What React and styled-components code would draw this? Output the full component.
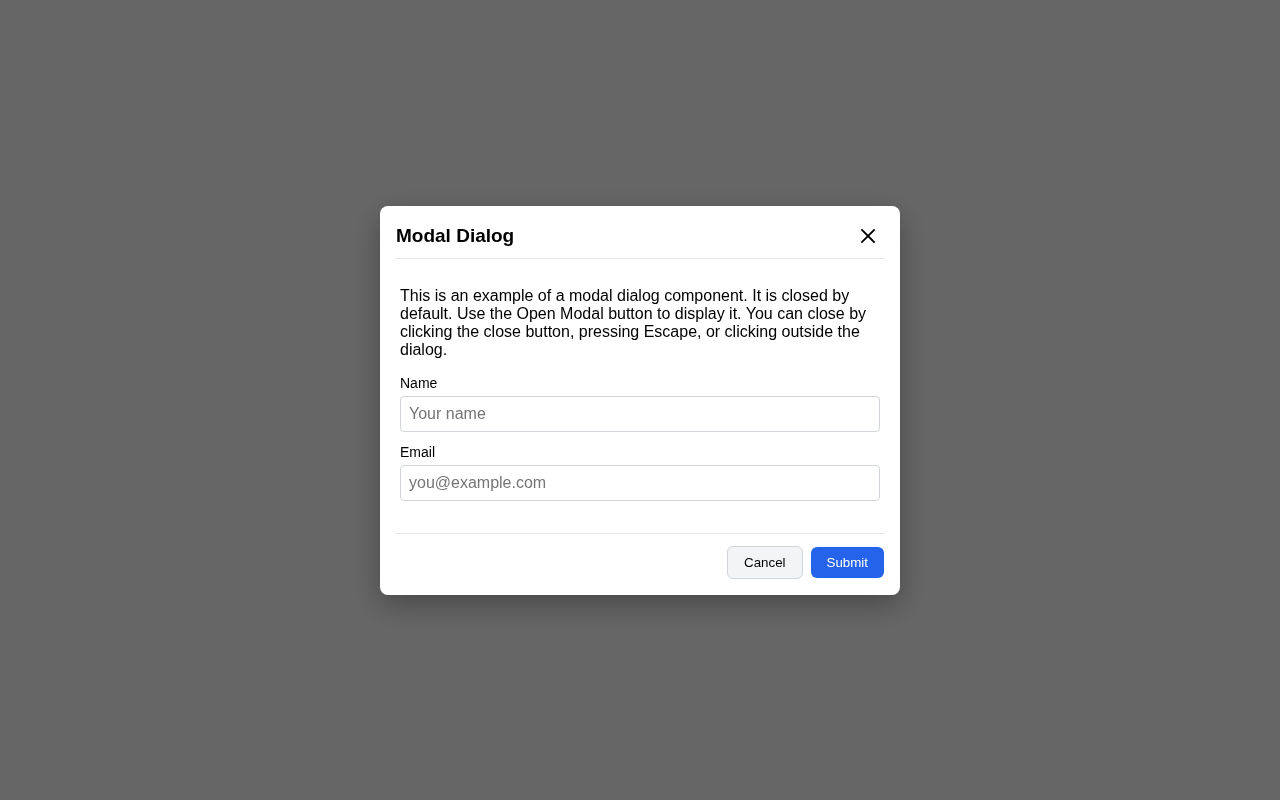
import React from "react";
import styled, { createGlobalStyle } from "styled-components";

const GlobalStyle = createGlobalStyle`
  html, body {
    margin: 0;
    padding: 0;
    height: 100%;
  }
  body {
    font-family: "Liberation Sans", Arial, Helvetica, sans-serif;
    color: #000;
  }
  #root {
    height: 100%;
  }
`;

const Overlay = styled.div`
  position: fixed;
  inset: 0;
  background: rgba(0, 0, 0, 0.6);
  display: flex;
  align-items: center;
  justify-content: center;
`;

const Dialog = styled.div`
  width: 520px;
  box-sizing: border-box;
  background: #fff;
  border-radius: 8px;
  padding: 16px;
  box-shadow: 0 10px 30px rgba(0, 0, 0, 0.3);
  display: flex;
  flex-direction: column;
`;

const Header = styled.div`
  display: flex;
  align-items: center;
  justify-content: space-between;
  height: 28px;
  padding-bottom: 8px;
  border-bottom: 1px solid #e5e7eb;
`;

const Title = styled.h2`
  margin: 0;
  font-size: 19px;
  line-height: 24px;
  font-weight: 700;
`;

const CloseButton = styled.button`
  width: 28px;
  height: 28px;
  padding: 0;
  margin-right: 2px;
  border: none;
  background: transparent;
  display: flex;
  align-items: center;
  justify-content: center;
  cursor: pointer;
  color: #000;
`;

const Body = styled.div`
  padding: 12px 4px 32px;
`;

const Text = styled.p`
  margin: 16px 0;
  font-size: 16px;
  line-height: 18px;
`;

const Field = styled.div`
  display: flex;
  flex-direction: column;
  margin-bottom: 12px;

  &:last-child {
    margin-bottom: 0;
  }
`;

const Label = styled.label`
  font-size: 14px;
  line-height: 17px;
  margin-bottom: 4px;
`;

const Input = styled.input`
  box-sizing: border-box;
  width: 100%;
  height: 36px;
  padding: 0 8px;
  border: 1px solid #d1d5db;
  border-radius: 4px;
  font-family: inherit;
  font-size: 16px;
  color: #000;
  outline: none;

  &::placeholder {
    color: #757575;
  }
`;

const Footer = styled.div`
  display: flex;
  justify-content: flex-end;
  align-items: center;
  gap: 8px;
  padding-top: 12px;
  border-top: 1px solid #e5e7eb;
`;

const Button = styled.button`
  font-family: inherit;
  font-size: 13.33px;
  height: ${(p) => (p.$primary ? "31px" : "33px")};
  padding: 0 16px;
  border-radius: 6px;
  cursor: pointer;
  border: ${(p) => (p.$primary ? "none" : "1px solid #d1d5db")};
  background: ${(p) => (p.$primary ? "#2563eb" : "#f3f4f6")};
  color: ${(p) => (p.$primary ? "#fff" : "#000")};
`;

function CloseIcon() {
  return (
    <svg width="18" height="18" viewBox="0 0 18 18" fill="none">
      <path
        d="M3 3 L15 15 M15 3 L3 15"
        stroke="currentColor"
        strokeWidth="1.8"
        strokeLinecap="square"
      />
    </svg>
  );
}

export default function App() {
  return (
    <>
      <GlobalStyle />
      <Overlay>
        <Dialog role="dialog" aria-modal="true">
          <Header>
            <Title>Modal Dialog</Title>
            <CloseButton aria-label="Close">
              <CloseIcon />
            </CloseButton>
          </Header>
          <Body>
            <Text>
              This is an example of a modal dialog component. It is closed by
              default. Use the Open Modal button to display it. You can close by
              clicking the close button, pressing Escape, or clicking outside the
              dialog.
            </Text>
            <Field>
              <Label htmlFor="name">Name</Label>
              <Input id="name" placeholder="Your name" />
            </Field>
            <Field>
              <Label htmlFor="email">Email</Label>
              <Input id="email" placeholder="you@example.com" />
            </Field>
          </Body>
          <Footer>
            <Button>Cancel</Button>
            <Button $primary>Submit</Button>
          </Footer>
        </Dialog>
      </Overlay>
    </>
  );
}
